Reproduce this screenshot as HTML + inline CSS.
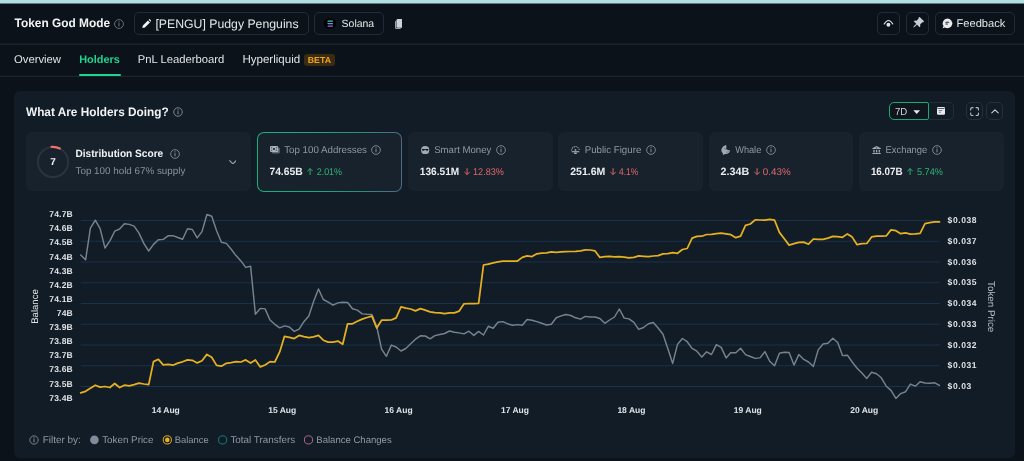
<!DOCTYPE html>
<html lang="en">
<head>
<meta charset="utf-8">
<title>Token God Mode</title>
<style>
*{box-sizing:border-box;margin:0;padding:0}
html,body{width:1024px;height:461px;overflow:hidden;background:#0b1219;font-family:"Liberation Sans",sans-serif;color:#e6e9ec}
.abs{position:absolute}
.t{position:absolute;white-space:nowrap;line-height:0;height:0}
#strip{left:0;top:0;width:1024px;height:4px;background:linear-gradient(#b5e0e3 0,#b5e0e3 3px,#607a7e 3px,#607a7e 4px)}
.hl{position:absolute;left:0;width:1024px;height:1px;background:#1b232d}
.btn{position:absolute;border:1px solid #222c37;border-radius:5px}
#panel{left:14px;top:91px;width:1001px;height:367px;background:#121c26;border-radius:6px}
.card{position:absolute;top:132px;height:59.4px;background:#18222c;border-radius:6px}
</style>
</head>
<body>
<div class="abs" id="strip"></div>
<div class="hl" style="top:43px;background:#111921"></div><div class="hl" style="top:44px"></div><div class="hl" style="top:75px;background:#10171f"></div><div class="hl" style="top:76px"></div>
<svg class="abs" style="left:113.0px;top:17.5px" width="12" height="12" viewBox="0 0 12 12"><circle cx="6" cy="6" r="4.45" fill="none" stroke="#6d7681" stroke-width="0.9"/><rect x="5.5" y="5.1" width="1" height="3.2" fill="#6d7681"/><rect x="5.45" y="3.3" width="1.1" height="1.1" fill="#6d7681"/></svg>
<div class="btn" style="left:134px;top:12px;width:175px;height:23px"></div>
<svg class="abs" style="left:141.5px;top:19.3px" width="9.4" height="9.4" viewBox="0 0 10 10"><path d="M0.3 9.7 L0.9 6.9 L6.3 1.5 L8.5 3.7 L3.1 9.1 Z M7 0.8 L7.6 0.2 Q8 -0.1 8.4 0.3 L9.7 1.6 Q10.1 2 9.8 2.4 L9.2 3 Z" fill="#f0f2f4"/></svg>
<div class="btn" style="left:314px;top:12px;width:70px;height:23px"></div>
<div class="abs" style="left:324.1px;top:17.8px;width:11.6px;height:11.6px;border-radius:50%;background:#000"></div>
<svg class="abs" style="left:326.6px;top:20px" width="6.6" height="7.2" viewBox="0 0 66 72"><path d="M10 4 H64 L56 18 H2 Z" fill="#3fd6b0"/><path d="M2 29 H56 L64 43 H10 Z" fill="#5f9ae6"/><path d="M10 54 H64 L56 68 H2 Z" fill="#8b6cf0"/></svg>
<svg class="abs" style="left:394.8px;top:18.6px" width="7.6" height="10" viewBox="0 0 7.6 10"><path d="M0 3 Q0 1.8 1.2 1.8 V8.6 Q1.2 9 1.6 9 H6 Q6 10 4.8 10 H1.2 Q0 10 0 8.8 Z" fill="#9aa1a9"/><rect x="1.5" y="0" width="6.1" height="8.8" rx="1.3" fill="#cdd2d8"/></svg>
<div class="btn" style="left:877px;top:12px;width:23px;height:23px"></div>
<svg class="abs" style="left:0;top:0" width="1024" height="44" viewBox="0 0 1024 44"><path d="M884.2 24 Q888.5 16.9 892.8 24" fill="none" stroke="#dfe3e7" stroke-width="1.15" stroke-linecap="round"/><circle cx="888.4" cy="24.7" r="1.95" fill="#dfe3e7"/><g transform="translate(918.3 22.6) rotate(45)" fill="#c9ced4"><path d="M-2.7 -5 H2.7 Q3.3 -5 3.3 -4.4 V-3.9 Q3.3 -3.4 2.7 -3.3 L2.5 -0.2 L3.8 1 Q4.1 1.4 4.1 1.8 V2.3 H-4.1 V1.8 Q-4.1 1.4 -3.8 1 L-2.5 -0.2 L-2.7 -3.3 Q-3.3 -3.4 -3.3 -3.9 V-4.4 Q-3.3 -5 -2.7 -5 Z"/><path d="M-0.55 2.3 H0.55 V5.8 L0 6.9 L-0.55 5.8 Z"/></g><path d="M947.4 18.5 A4.85 4.85 0 1 1 944.9 27.5 L942.6 28.3 L943.5 26.1 A4.85 4.85 0 0 1 947.4 18.5 Z" fill="#e9ecef"/><rect x="945.4" y="21.7" width="3.8" height="1" rx="0.3" fill="#252b33"/><rect x="945.4" y="23.6" width="2.5" height="1" rx="0.3" fill="#252b33"/></svg>
<div class="btn" style="left:906px;top:12px;width:23px;height:23px"></div>
<div class="btn" style="left:935px;top:12px;width:80px;height:23px"></div>
<div class="abs" style="left:78.8px;top:73.5px;width:41.8px;height:2.5px;background:#1fd691;border-radius:1.2px"></div>
<div class="abs" style="left:304.2px;top:54px;width:30.5px;height:12px;background:#392c13;border-radius:3px"></div>
<div class="abs" id="panel"></div>
<svg class="abs" style="left:172.4px;top:105.7px" width="12" height="12" viewBox="0 0 12 12"><circle cx="6" cy="6" r="4.25" fill="none" stroke="#848e98" stroke-width="0.9"/><rect x="5.5" y="5.1" width="1" height="3.2" fill="#848e98"/><rect x="5.45" y="3.3" width="1.1" height="1.1" fill="#848e98"/></svg>
<div class="abs" style="left:929px;top:102.4px;width:25px;height:17.6px;border:1px solid #242d38;border-left:none;border-radius:0 5px 5px 0"></div>
<div class="abs" style="left:888.6px;top:102.4px;width:40.4px;height:17.6px;border:1px solid #1aa877;border-radius:5px 2px 2px 5px;background:#0f161e"></div>
<svg class="abs" style="left:913.2px;top:109.8px" width="7.4" height="4.2" viewBox="0 0 7.4 4.2"><path d="M0.3 0.2 H7.1 L3.7 4 Z" fill="#e9ecef"/></svg>
<svg class="abs" style="left:936.7px;top:107.3px" width="8" height="7.8" viewBox="0 0 8 7.8"><rect x="0" y="0" width="8" height="7.8" rx="1.3" fill="#e9ecef"/><rect x="0.6" y="1.3" width="6.8" height="0.7" fill="#131b24"/><rect x="1.7" y="3.3" width="3.6" height="0.7" fill="#131b24" opacity="0.7"/><rect x="1.7" y="4.8" width="2.2" height="0.7" fill="#131b24" opacity="0.7"/></svg>
<div class="btn" style="left:965.8px;top:102.4px;width:17px;height:17.6px;border-color:#26303b"></div>
<svg class="abs" style="left:969.9px;top:106.8px" width="9.2" height="9.2" viewBox="0 0 9.2 9.2"><path d="M0.7 3 V2.1 Q0.7 0.7 2.1 0.7 H3 M6.2 0.7 H7.1 Q8.5 0.7 8.5 2.1 V3 M8.5 6.2 V7.1 Q8.5 8.5 7.1 8.5 H6.2 M3 8.5 H2.1 Q0.7 8.5 0.7 7.1 V6.2" fill="none" stroke="#b4bbc3" stroke-width="1.2" stroke-linecap="round"/></svg>
<div class="btn" style="left:986.3px;top:102.4px;width:17px;height:17.6px;border-color:#26303b"></div>
<svg class="abs" style="left:990.9px;top:108.9px" width="8.2" height="4.8" viewBox="0 0 8.2 4.8"><path d="M0.8 3.9 L4 0.9 L7.2 3.9" fill="none" stroke="#cfd4d9" stroke-width="1.1" stroke-linecap="round" stroke-linejoin="round"/></svg>
<div class="card" style="left:25.6px;width:225.6px"></div>
<svg class="abs" style="left:36px;top:144.5px" width="34" height="34" viewBox="-17 -17 34 34"><circle r="15.1" fill="none" stroke="#2b333d" stroke-width="2"/><path d="M-1.4 -15.05 A15.1 15.1 0 0 1 6.8 -13.5" fill="none" stroke="#f0706f" stroke-width="2.2" stroke-linecap="round"/></svg>
<svg class="abs" style="left:168.9px;top:147.9px" width="12" height="12" viewBox="0 0 12 12"><circle cx="6" cy="6" r="4.35" fill="none" stroke="#848e98" stroke-width="0.9"/><rect x="5.5" y="5.1" width="1" height="3.2" fill="#848e98"/><rect x="5.45" y="3.3" width="1.1" height="1.1" fill="#848e98"/></svg>
<svg class="abs" style="left:228.6px;top:159.7px" width="7.8" height="4.8" viewBox="0 0 7.8 4.8"><path d="M0.7 0.7 L3.9 3.9 L7.1 0.7" fill="none" stroke="#959ea8" stroke-width="1.2" stroke-linecap="round" stroke-linejoin="round"/></svg>
<div class="abs" style="left:256.9px;top:131.5px;width:145.3px;height:60.4px;border-radius:7px;background:linear-gradient(90deg,#1aae7b 0%,#1fa67c 45%,#32887f 75%,#4f6a82 100%)"></div>
<div class="abs" style="left:257.9px;top:132.5px;width:143.3px;height:58.4px;border-radius:6px;background:#18222c"></div>
<svg class="abs" style="left:369.9px;top:143.9px" width="12" height="12" viewBox="0 0 12 12"><circle cx="6" cy="6" r="4.35" fill="none" stroke="#848e98" stroke-width="0.9"/><rect x="5.5" y="5.1" width="1" height="3.2" fill="#848e98"/><rect x="5.45" y="3.3" width="1.1" height="1.1" fill="#848e98"/></svg>
<svg class="abs" style="left:307.3px;top:168.3px" width="6.2" height="7.2" viewBox="0 0 6.2 7.2"><path d="M3.1 7 V0.6 M0.4 3.3 L3.1 0.6 L5.8 3.3" fill="none" stroke="#2fb574" stroke-width="0.95"/></svg>
<div class="card" style="left:408.1px;width:144.7px"></div>
<svg class="abs" style="left:495.1px;top:143.9px" width="12" height="12" viewBox="0 0 12 12"><circle cx="6" cy="6" r="4.35" fill="none" stroke="#848e98" stroke-width="0.9"/><rect x="5.5" y="5.1" width="1" height="3.2" fill="#848e98"/><rect x="5.45" y="3.3" width="1.1" height="1.1" fill="#848e98"/></svg>
<svg class="abs" style="left:463.5px;top:168.3px" width="6.2" height="7.2" viewBox="0 0 6.2 7.2"><path d="M3.1 0.2 V6.6 M0.4 3.9 L3.1 6.6 L5.8 3.9" fill="none" stroke="#e0686c" stroke-width="0.95"/></svg>
<div class="card" style="left:558.4px;width:144.7px"></div>
<svg class="abs" style="left:644.8px;top:143.9px" width="12" height="12" viewBox="0 0 12 12"><circle cx="6" cy="6" r="4.35" fill="none" stroke="#848e98" stroke-width="0.9"/><rect x="5.5" y="5.1" width="1" height="3.2" fill="#848e98"/><rect x="5.45" y="3.3" width="1.1" height="1.1" fill="#848e98"/></svg>
<svg class="abs" style="left:609.6px;top:168.3px" width="6.2" height="7.2" viewBox="0 0 6.2 7.2"><path d="M3.1 0.2 V6.6 M0.4 3.9 L3.1 6.6 L5.8 3.9" fill="none" stroke="#e0686c" stroke-width="0.95"/></svg>
<div class="card" style="left:708.6px;width:144.7px"></div>
<svg class="abs" style="left:764.9px;top:143.9px" width="12" height="12" viewBox="0 0 12 12"><circle cx="6" cy="6" r="4.35" fill="none" stroke="#848e98" stroke-width="0.9"/><rect x="5.5" y="5.1" width="1" height="3.2" fill="#848e98"/><rect x="5.45" y="3.3" width="1.1" height="1.1" fill="#848e98"/></svg>
<svg class="abs" style="left:753.7px;top:168.3px" width="6.2" height="7.2" viewBox="0 0 6.2 7.2"><path d="M3.1 0.2 V6.6 M0.4 3.9 L3.1 6.6 L5.8 3.9" fill="none" stroke="#e0686c" stroke-width="0.95"/></svg>
<div class="card" style="left:859px;width:144.7px"></div>
<svg class="abs" style="left:930.7px;top:143.9px" width="12" height="12" viewBox="0 0 12 12"><circle cx="6" cy="6" r="4.35" fill="none" stroke="#848e98" stroke-width="0.9"/><rect x="5.5" y="5.1" width="1" height="3.2" fill="#848e98"/><rect x="5.45" y="3.3" width="1.1" height="1.1" fill="#848e98"/></svg>
<svg class="abs" style="left:907.3px;top:168.3px" width="6.2" height="7.2" viewBox="0 0 6.2 7.2"><path d="M3.1 7 V0.6 M0.4 3.3 L3.1 0.6 L5.8 3.3" fill="none" stroke="#2fb574" stroke-width="0.95"/></svg>
<svg class="abs" style="left:270px;top:146.3px" width="10" height="7.6" viewBox="0 0 10 7.6"><rect x="1.7" y="1.4" width="8.1" height="6" rx="1.1" fill="#5f6a75"/><rect x="0" y="0" width="8.1" height="6" rx="1.1" fill="#a9b1ba"/><circle cx="4.05" cy="3" r="1.05" fill="#18222c"/><rect x="1" y="1.1" width="1.3" height="0.8" fill="#4d5761"/><rect x="5.8" y="1.1" width="1.3" height="0.8" fill="#4d5761"/><rect x="1" y="4.1" width="1.3" height="0.8" fill="#4d5761"/><rect x="5.8" y="4.1" width="1.3" height="0.8" fill="#4d5761"/><rect x="1.2" y="2.6" width="1" height="0.8" fill="#4d5761"/><rect x="5.9" y="2.6" width="1" height="0.8" fill="#4d5761"/></svg>
<svg class="abs" style="left:421.3px;top:145.9px" width="8.4" height="8.4" viewBox="0 0 8.4 8.4"><circle cx="4.2" cy="4.2" r="4.1" fill="#a0a9b2"/><path d="M1 3 H7.4 V3.5 Q7.4 4.8 6.1 4.8 Q4.9 4.8 4.7 3.7 H3.7 Q3.5 4.8 2.3 4.8 Q1 4.8 1 3.5 Z" fill="#0f151c"/></svg>
<svg class="abs" style="left:571.3px;top:145.6px" width="9" height="8.8" viewBox="0 0 9 8.8"><path d="M0.6 4.4 A3.85 3.85 0 0 1 8.3 4.4" fill="none" stroke="#a0a9b2" stroke-width="1.1" stroke-dasharray="1.15 0.85"/><circle cx="4.45" cy="3.9" r="0.95" fill="#a0a9b2"/><rect x="0.7" y="5.3" width="7.6" height="1" rx="0.3" fill="#b9c0c8"/><rect x="3.1" y="6.5" width="2.7" height="2" rx="0.3" fill="#a0a9b2"/></svg>
<svg class="abs" style="left:721.2px;top:144.8px" width="9.2" height="10.4" viewBox="0 0 9.2 10.4"><path d="M4.9 0 Q5.7 0.6 5.3 2.2 Q4.9 3.6 5.9 4.5 Q7.4 5.6 9 5.2 Q9.1 7.4 7 8.6 Q5.2 9.4 3.8 9 L2.3 10.3 L1.9 8.6 Q-0.2 6.6 0.5 4 Q1.4 1 4.9 0 Z" fill="#a0a9b2"/><path d="M3.3 3.5 Q4.2 4.3 5.3 4.3" fill="none" stroke="#3b4550" stroke-width="0.7"/><path d="M5 7.4 Q6.6 7.2 7.8 6.2" fill="none" stroke="#55606b" stroke-width="0.6"/></svg>
<svg class="abs" style="left:871.8px;top:145.6px" width="9.2" height="8.8" viewBox="0 0 9.2 8.8"><path d="M4.6 0.1 L8.9 2.3 V3.1 H0.3 V2.3 Z" fill="#a0a9b2"/><circle cx="4.6" cy="1.9" r="0.55" fill="#2a343f"/><rect x="1.3" y="3.8" width="1.3" height="2.7" fill="#a0a9b2"/><rect x="3.95" y="3.8" width="1.3" height="2.7" fill="#a0a9b2"/><rect x="6.6" y="3.8" width="1.3" height="2.7" fill="#a0a9b2"/><rect x="0.3" y="7.1" width="8.6" height="1.1" rx="0.3" fill="#a0a9b2"/></svg>
<svg class="abs" style="left:0;top:0;will-change:transform;text-rendering:geometricPrecision" width="1024" height="461" viewBox="0 0 1024 461">
<rect x="80.7" y="220.00" width="858.9" height="1" fill="#19314a"/>
<rect x="80.7" y="240.75" width="858.9" height="1" fill="#19314a"/>
<rect x="80.7" y="261.50" width="858.9" height="1" fill="#19314a"/>
<rect x="80.7" y="282.25" width="858.9" height="1" fill="#19314a"/>
<rect x="80.7" y="303.00" width="858.9" height="1" fill="#19314a"/>
<rect x="80.7" y="323.75" width="858.9" height="1" fill="#19314a"/>
<rect x="80.7" y="344.50" width="858.9" height="1" fill="#19314a"/>
<rect x="80.7" y="365.25" width="858.9" height="1" fill="#19314a"/>
<rect x="80.7" y="386.00" width="858.9" height="1" fill="#19314a"/>
<path d="M80.7 255.0 L85.6 259.8 L90.4 228.2 L95.3 220.2 L100.1 228.6 L105.0 248.0 L109.9 240.9 L114.7 231.2 L119.6 229.0 L124.4 223.8 L129.3 224.4 L134.1 226.1 L139.0 233.1 L143.8 243.4 L148.7 251.0 L153.5 244.4 L158.4 239.8 L163.2 239.4 L168.1 235.8 L172.9 235.6 L177.8 237.5 L182.6 239.2 L187.5 228.8 L192.3 229.5 L197.2 237.9 L202.0 231.6 L206.9 214.5 L211.7 216.2 L216.6 230.7 L221.4 242.3 L226.3 243.4 L231.2 249.3 L236.0 255.6 L240.9 260.9 L245.7 267.4 L250.6 266.2 L255.4 314.3 L260.3 308.4 L265.1 308.9 L270.0 320.0 L274.8 324.3 L279.7 327.8 L284.5 325.9 L289.4 327.0 L294.2 331.4 L299.1 329.1 L303.9 321.7 L308.8 316.0 L313.6 301.6 L318.5 289.0 L323.3 299.5 L328.2 302.1 L333.0 305.2 L337.9 302.9 L342.7 302.3 L347.6 302.5 L352.5 308.8 L357.3 310.1 L362.2 313.9 L367.0 314.3 L371.9 314.5 L376.7 326.5 L381.6 349.1 L386.4 356.3 L391.3 345.1 L396.1 347.0 L401.0 351.0 L405.8 348.5 L410.7 343.8 L415.5 339.2 L420.4 335.8 L425.2 336.0 L430.1 338.8 L434.9 335.6 L439.8 334.5 L444.6 333.5 L449.5 331.0 L454.3 332.2 L459.2 332.9 L464.0 333.9 L468.9 331.2 L473.8 335.4 L478.6 331.4 L483.5 335.0 L488.3 326.3 L493.2 328.2 L498.0 322.3 L502.9 321.6 L507.7 323.8 L512.6 325.2 L517.4 324.6 L522.3 325.2 L527.1 319.5 L532.0 320.2 L536.8 321.6 L541.7 323.3 L546.5 325.0 L551.4 324.2 L556.2 317.8 L561.1 315.9 L565.9 314.5 L570.8 315.5 L575.6 317.8 L580.5 319.1 L585.3 316.4 L590.2 317.0 L595.1 317.0 L599.9 318.5 L604.8 323.3 L609.6 320.0 L614.5 317.0 L619.3 309.0 L624.2 318.1 L629.0 318.9 L633.9 322.3 L638.7 329.4 L643.6 327.5 L648.4 323.8 L653.3 322.5 L658.1 328.0 L663.0 334.3 L667.8 348.6 L672.7 363.4 L677.5 344.4 L682.4 338.5 L687.2 341.7 L692.1 348.4 L696.9 351.2 L701.8 357.1 L706.6 351.8 L711.5 354.5 L716.4 344.6 L721.2 347.4 L726.1 357.9 L730.9 352.6 L735.8 352.7 L740.6 348.2 L745.5 354.6 L750.3 356.5 L755.2 358.4 L760.0 357.9 L764.9 351.6 L769.7 361.3 L774.6 365.8 L779.4 353.3 L784.3 352.3 L789.1 352.5 L794.0 365.1 L798.8 354.6 L803.7 359.4 L808.5 362.0 L813.4 366.4 L818.2 349.9 L823.1 344.0 L827.9 343.2 L832.8 338.3 L837.7 342.5 L842.5 355.6 L847.4 355.2 L852.2 362.0 L857.1 368.3 L861.9 373.1 L866.8 378.4 L871.6 372.3 L876.5 373.8 L881.3 377.8 L886.2 386.2 L891.0 390.4 L895.9 398.4 L900.7 393.6 L905.6 391.7 L910.4 384.1 L915.3 386.2 L920.1 381.8 L925.0 383.0 L929.8 383.3 L934.7 382.8 L939.5 385.4" fill="none" stroke="#76838f" stroke-width="1.45" stroke-linejoin="round" stroke-linecap="round"/>
<path d="M80.7 392.8 L85.6 391.3 L90.4 388.2 L95.3 385.2 L100.1 387.1 L105.0 386.5 L109.9 387.5 L114.7 383.5 L119.6 387.5 L124.4 385.2 L129.3 385.9 L134.1 384.6 L139.0 383.1 L143.8 384.0 L148.7 384.6 L153.5 361.6 L158.4 359.3 L163.2 364.8 L168.1 364.3 L172.9 365.2 L177.8 363.1 L182.6 361.8 L187.5 359.9 L192.3 360.3 L197.2 362.9 L202.0 360.8 L206.9 354.4 L211.7 357.2 L216.6 365.4 L221.4 366.2 L226.3 363.3 L231.2 362.6 L236.0 361.6 L240.9 362.0 L245.7 359.9 L250.6 363.1 L255.4 359.9 L260.3 366.9 L265.1 365.0 L270.0 361.6 L274.8 362.0 L279.7 351.9 L284.5 336.3 L289.4 337.3 L294.2 338.6 L299.1 335.4 L303.9 336.7 L308.8 337.7 L313.6 336.9 L318.5 335.4 L323.3 340.2 L328.2 342.1 L333.0 342.1 L337.9 341.1 L342.7 344.3 L347.6 323.8 L352.5 323.8 L357.3 321.3 L362.2 319.1 L367.0 317.5 L371.9 316.2 L376.7 328.0 L381.6 320.2 L386.4 320.2 L391.3 320.0 L396.1 317.9 L401.0 306.9 L405.8 308.2 L410.7 309.0 L415.5 310.9 L420.4 308.6 L425.2 310.1 L430.1 311.8 L434.9 312.6 L439.8 312.8 L444.6 313.7 L449.5 312.8 L454.3 312.8 L459.2 311.1 L464.0 303.8 L468.9 303.5 L473.8 303.5 L478.6 303.4 L483.5 265.0 L488.3 264.1 L493.2 262.9 L498.0 261.8 L502.9 261.2 L507.7 261.0 L512.6 261.0 L517.4 261.0 L522.3 257.4 L527.1 255.9 L532.0 256.6 L536.8 253.8 L541.7 253.2 L546.5 252.8 L551.4 251.9 L556.2 252.3 L561.1 251.9 L565.9 251.7 L570.8 251.5 L575.6 251.3 L580.5 250.9 L585.3 249.8 L590.2 250.0 L595.1 250.9 L599.9 257.4 L604.8 256.6 L609.6 256.3 L614.5 256.9 L619.3 256.7 L624.2 257.1 L629.0 257.9 L633.9 257.3 L638.7 255.8 L643.6 256.3 L648.4 256.7 L653.3 256.0 L658.1 255.6 L663.0 253.9 L667.8 253.7 L672.7 252.7 L677.5 253.3 L682.4 249.5 L687.2 248.5 L692.1 238.1 L696.9 236.4 L701.8 236.2 L706.6 234.5 L711.5 234.3 L716.4 233.7 L721.2 233.1 L726.1 233.9 L730.9 234.7 L735.8 237.7 L740.6 236.2 L745.5 225.3 L750.3 224.0 L755.2 219.8 L760.0 220.0 L764.9 220.2 L769.7 219.3 L774.6 220.2 L779.4 232.4 L784.3 238.8 L789.1 245.1 L794.0 243.6 L798.8 242.3 L803.7 242.1 L808.5 244.2 L813.4 239.0 L818.2 239.4 L823.1 239.4 L827.9 238.1 L832.8 236.4 L837.7 236.6 L842.5 237.3 L847.4 233.9 L852.2 237.1 L857.1 244.7 L861.9 243.6 L866.8 243.4 L871.6 236.9 L876.5 236.2 L881.3 236.2 L886.2 236.0 L891.0 229.9 L895.9 230.7 L900.7 233.7 L905.6 232.8 L910.4 234.1 L915.3 233.9 L920.1 233.3 L925.0 223.6 L929.8 222.7 L934.7 221.9 L939.5 221.9" fill="none" stroke="#e5b121" stroke-width="1.75" stroke-linejoin="round" stroke-linecap="round"/>
<text x="72.8" y="217.15" text-anchor="end" letter-spacing="0.15" font-family="Liberation Sans, sans-serif" font-weight="bold" font-size="8.5" fill="#e1e4e8">74.7B</text>
<text x="72.8" y="231.27" text-anchor="end" letter-spacing="0.15" font-family="Liberation Sans, sans-serif" font-weight="bold" font-size="8.5" fill="#e1e4e8">74.6B</text>
<text x="72.8" y="245.39" text-anchor="end" letter-spacing="0.15" font-family="Liberation Sans, sans-serif" font-weight="bold" font-size="8.5" fill="#e1e4e8">74.5B</text>
<text x="72.8" y="259.51" text-anchor="end" letter-spacing="0.15" font-family="Liberation Sans, sans-serif" font-weight="bold" font-size="8.5" fill="#e1e4e8">74.4B</text>
<text x="72.8" y="273.63" text-anchor="end" letter-spacing="0.15" font-family="Liberation Sans, sans-serif" font-weight="bold" font-size="8.5" fill="#e1e4e8">74.3B</text>
<text x="72.8" y="287.75" text-anchor="end" letter-spacing="0.15" font-family="Liberation Sans, sans-serif" font-weight="bold" font-size="8.5" fill="#e1e4e8">74.2B</text>
<text x="72.8" y="301.87" text-anchor="end" letter-spacing="0.15" font-family="Liberation Sans, sans-serif" font-weight="bold" font-size="8.5" fill="#e1e4e8">74.1B</text>
<text x="72.8" y="315.99" text-anchor="end" letter-spacing="0.15" font-family="Liberation Sans, sans-serif" font-weight="bold" font-size="8.5" fill="#e1e4e8">74B</text>
<text x="72.8" y="330.11" text-anchor="end" letter-spacing="0.15" font-family="Liberation Sans, sans-serif" font-weight="bold" font-size="8.5" fill="#e1e4e8">73.9B</text>
<text x="72.8" y="344.23" text-anchor="end" letter-spacing="0.15" font-family="Liberation Sans, sans-serif" font-weight="bold" font-size="8.5" fill="#e1e4e8">73.8B</text>
<text x="72.8" y="358.35" text-anchor="end" letter-spacing="0.15" font-family="Liberation Sans, sans-serif" font-weight="bold" font-size="8.5" fill="#e1e4e8">73.7B</text>
<text x="72.8" y="372.47" text-anchor="end" letter-spacing="0.15" font-family="Liberation Sans, sans-serif" font-weight="bold" font-size="8.5" fill="#e1e4e8">73.6B</text>
<text x="72.8" y="386.59" text-anchor="end" letter-spacing="0.15" font-family="Liberation Sans, sans-serif" font-weight="bold" font-size="8.5" fill="#e1e4e8">73.5B</text>
<text x="72.8" y="400.71" text-anchor="end" letter-spacing="0.15" font-family="Liberation Sans, sans-serif" font-weight="bold" font-size="8.5" fill="#e1e4e8">73.4B</text>
<text x="947.6" y="223.10" letter-spacing="0.6" font-family="Liberation Sans, sans-serif" font-weight="bold" font-size="8.5" fill="#e1e4e8">$0.038</text>
<text x="947.6" y="243.85" letter-spacing="0.6" font-family="Liberation Sans, sans-serif" font-weight="bold" font-size="8.5" fill="#e1e4e8">$0.037</text>
<text x="947.6" y="264.60" letter-spacing="0.6" font-family="Liberation Sans, sans-serif" font-weight="bold" font-size="8.5" fill="#e1e4e8">$0.036</text>
<text x="947.6" y="285.35" letter-spacing="0.6" font-family="Liberation Sans, sans-serif" font-weight="bold" font-size="8.5" fill="#e1e4e8">$0.035</text>
<text x="947.6" y="306.10" letter-spacing="0.6" font-family="Liberation Sans, sans-serif" font-weight="bold" font-size="8.5" fill="#e1e4e8">$0.034</text>
<text x="947.6" y="326.85" letter-spacing="0.6" font-family="Liberation Sans, sans-serif" font-weight="bold" font-size="8.5" fill="#e1e4e8">$0.033</text>
<text x="947.6" y="347.60" letter-spacing="0.6" font-family="Liberation Sans, sans-serif" font-weight="bold" font-size="8.5" fill="#e1e4e8">$0.032</text>
<text x="947.6" y="368.35" letter-spacing="0.6" font-family="Liberation Sans, sans-serif" font-weight="bold" font-size="8.5" fill="#e1e4e8">$0.031</text>
<text x="947.6" y="389.10" letter-spacing="0.6" font-family="Liberation Sans, sans-serif" font-weight="bold" font-size="8.5" fill="#e1e4e8">$0.03</text>
<text x="165.8" y="413.3" text-anchor="middle" font-family="Liberation Sans, sans-serif" font-weight="bold" font-size="8.5" fill="#e1e4e8">14 Aug</text>
<text x="282.2" y="413.3" text-anchor="middle" font-family="Liberation Sans, sans-serif" font-weight="bold" font-size="8.5" fill="#e1e4e8">15 Aug</text>
<text x="398.6" y="413.3" text-anchor="middle" font-family="Liberation Sans, sans-serif" font-weight="bold" font-size="8.5" fill="#e1e4e8">16 Aug</text>
<text x="515.0" y="413.3" text-anchor="middle" font-family="Liberation Sans, sans-serif" font-weight="bold" font-size="8.5" fill="#e1e4e8">17 Aug</text>
<text x="631.4" y="413.3" text-anchor="middle" font-family="Liberation Sans, sans-serif" font-weight="bold" font-size="8.5" fill="#e1e4e8">18 Aug</text>
<text x="747.8" y="413.3" text-anchor="middle" font-family="Liberation Sans, sans-serif" font-weight="bold" font-size="8.5" fill="#e1e4e8">19 Aug</text>
<text x="864.2" y="413.3" text-anchor="middle" font-family="Liberation Sans, sans-serif" font-weight="bold" font-size="8.5" fill="#e1e4e8">20 Aug</text>
<text transform="translate(38 306.5) rotate(-90)" text-anchor="middle" font-family="Liberation Sans, sans-serif" font-size="9.6" fill="#dfe3e7">Balance</text>
<text transform="translate(987.8 306.7) rotate(90)" text-anchor="middle" font-family="Liberation Sans, sans-serif" font-size="9.8" fill="#b8bfc7">Token Price</text>
<circle cx="94.4" cy="439.9" r="4.3" fill="#7f8b98"/>
<circle cx="167.3" cy="439.9" r="4.1" fill="none" stroke="#e8b21d" stroke-width="1"/><circle cx="167.3" cy="439.9" r="2.3" fill="#e8b21d"/>
<circle cx="222.6" cy="439.9" r="4.1" fill="none" stroke="#15807a" stroke-width="1"/>
<circle cx="308.5" cy="439.9" r="4.1" fill="none" stroke="#b8688f" stroke-width="1"/>
</svg>
<svg class="abs" style="left:27.7px;top:433.9px" width="12" height="12" viewBox="0 0 12 12"><circle cx="6" cy="6" r="4.15" fill="none" stroke="#848e98" stroke-width="0.9"/><rect x="5.5" y="5.1" width="1" height="3.2" fill="#848e98"/><rect x="5.45" y="3.3" width="1.1" height="1.1" fill="#848e98"/></svg>
<svg class="abs" style="left:0;top:0;will-change:transform;text-rendering:geometricPrecision" width="1024" height="461" viewBox="0 0 1024 461" font-family="Liberation Sans, sans-serif">
<text id="tgm" x="14.5" y="27.3" font-size="12.2" fill="#f0f2f4" font-weight="bold" textLength="95.6" lengthAdjust="spacingAndGlyphs">Token God Mode</text>
<text id="pengu" x="155.4" y="27.7" font-size="12.27" fill="#e4e7ea">[PENGU] Pudgy Penguins</text>
<text id="sol" x="341.6" y="27.4" font-size="10.47" fill="#e4e7ea">Solana</text>
<text id="fb" x="956.5" y="27.4" font-size="11.13" fill="#e4e7ea">Feedback</text>
<text id="tab1" x="14" y="63.4" font-size="11.28" fill="#e1e4e8">Overview</text>
<text id="tab2" x="79.2" y="63.4" font-size="10.9" fill="#1fd691" font-weight="bold">Holders</text>
<text id="tab3" x="137.7" y="63.4" font-size="11.25" fill="#e1e4e8">PnL Leaderboard</text>
<text id="tab4" x="242.4" y="63.4" font-size="11.55" fill="#e1e4e8">Hyperliquid</text>
<text id="beta" x="307.8" y="63.2" font-size="8.76" fill="#f0a322" font-weight="bold">BETA</text>
<text id="ptitle" x="26" y="116" font-size="12.3" fill="#f0f2f4" font-weight="bold" textLength="142.7" lengthAdjust="spacingAndGlyphs">What Are Holders Doing?</text>
<text id="sevend" x="895" y="114.8" font-size="10.1" fill="#d3d8dd" textLength="12.3" lengthAdjust="spacingAndGlyphs">7D</text>
<text id="seven" x="50.2" y="165" font-size="10" fill="#f0f2f4" font-weight="bold">7</text>
<text id="dscore" x="75.5" y="157.2" font-size="10.6" fill="#f0f2f4" font-weight="bold" textLength="87.7" lengthAdjust="spacingAndGlyphs">Distribution Score</text>
<text id="dsub" x="75.5" y="174.2" font-size="9.84" fill="#87919c">Top 100 hold 67% supply</text>
<text id="cl0" x="284.2" y="153.4" font-size="9.8" fill="#8f99a4" textLength="82.8" lengthAdjust="spacingAndGlyphs">Top 100 Addresses</text>
<text id="cv0" x="269.4" y="175.4" font-size="10.6" fill="#eceef1" font-weight="bold" textLength="33.3" lengthAdjust="spacingAndGlyphs">74.65B</text>
<text id="cp0" x="316.7" y="175.4" font-size="9.8" fill="#2fb574" textLength="25.3" lengthAdjust="spacingAndGlyphs">2.01%</text>
<text id="cl1" x="434.2" y="153.4" font-size="9.8" fill="#8f99a4" textLength="57.2" lengthAdjust="spacingAndGlyphs">Smart Money</text>
<text id="cv1" x="419.8" y="175.4" font-size="10.6" fill="#eceef1" font-weight="bold" textLength="39.4" lengthAdjust="spacingAndGlyphs">136.51M</text>
<text id="cp1" x="473" y="175.4" font-size="9.8" fill="#e0686c" textLength="30.9" lengthAdjust="spacingAndGlyphs">12.83%</text>
<text id="cl2" x="584.7" y="153.4" font-size="9.8" fill="#8f99a4" textLength="56.6" lengthAdjust="spacingAndGlyphs">Public Figure</text>
<text id="cv2" x="570.2" y="175.4" font-size="10.6" fill="#eceef1" font-weight="bold" textLength="35.1" lengthAdjust="spacingAndGlyphs">251.6M</text>
<text id="cp2" x="619" y="175.4" font-size="9.8" fill="#e0686c" textLength="19.1" lengthAdjust="spacingAndGlyphs">4.1%</text>
<text id="cl3" x="735.2" y="153.4" font-size="9.8" fill="#8f99a4" textLength="26.1" lengthAdjust="spacingAndGlyphs">Whale</text>
<text id="cv3" x="720.6" y="175.4" font-size="10.6" fill="#eceef1" font-weight="bold" textLength="28.6" lengthAdjust="spacingAndGlyphs">2.34B</text>
<text id="cp3" x="762.8" y="175.4" font-size="9.8" fill="#e0686c" textLength="27.8" lengthAdjust="spacingAndGlyphs">0.43%</text>
<text id="cl4" x="885.5" y="153.4" font-size="9.8" fill="#8f99a4" textLength="41.8" lengthAdjust="spacingAndGlyphs">Exchange</text>
<text id="cv4" x="870.9" y="175.4" font-size="10.6" fill="#eceef1" font-weight="bold" textLength="31.8" lengthAdjust="spacingAndGlyphs">16.07B</text>
<text id="cp4" x="917" y="175.4" font-size="9.8" fill="#2fb574" textLength="25.8" lengthAdjust="spacingAndGlyphs">5.74%</text>
<text id="fby" x="42.7" y="443.2" font-size="9.96" fill="#8f99a4">Filter by:</text>
<text id="lg1" x="102.2" y="443.2" font-size="9.82" fill="#8f99a4">Token Price</text>
<text id="lg2" x="174.7" y="443.2" font-size="9.42" fill="#8f99a4">Balance</text>
<text id="lg3" x="230.4" y="443.2" font-size="9.9" fill="#8f99a4">Total Transfers</text>
<text id="lg4" x="316.3" y="443.2" font-size="9.56" fill="#8f99a4">Balance Changes</text>
</svg>
</body>
</html>
